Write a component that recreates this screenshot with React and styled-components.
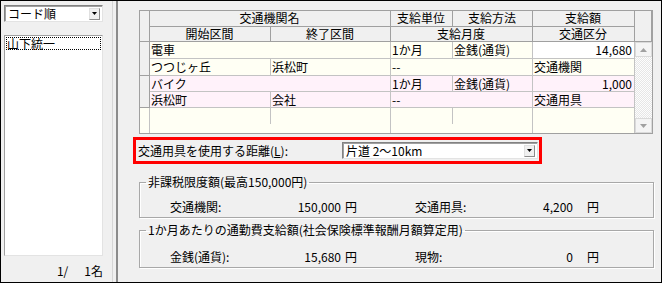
import React from 'react';
import styled, { createGlobalStyle } from 'styled-components';

const GlobalStyle = createGlobalStyle`
  html, body {
    margin: 0;
    padding: 0;
    background: #f0f0f0;
  }
  body {
    font-family: "Noto Sans CJK JP", "Noto Sans", sans-serif;
    font-size: 12px;
    color: #000;
  }
`;

const Window = styled.div`
  width: 662px;
  height: 283px;
  box-sizing: border-box;
  border: 1px solid #000;
  background: #f0f0f0;
  display: flex;
`;

const LeftPane = styled.div`
  width: 112px;
  box-sizing: border-box;
  border-right: 1px solid #d6d6d6;
  padding: 4px 8px 0 3px;
  display: flex;
  flex-direction: column;
`;

const Splitter = styled.div`
  width: 5px;
  box-sizing: border-box;
  border-right: 2px solid #8c8c8c;
`;

const RightPane = styled.div`
  flex: 1;
  padding: 9px 6px 0 15px;
  display: flex;
  flex-direction: column;
`;

const Combo = styled.div`
  width: ${p => p.$width}px;
  height: 17px;
  box-sizing: border-box;
  border: 1px solid #828282;
  border-right-color: #e3e3e3;
  border-bottom-color: #e3e3e3;
  box-shadow: inset 1px 1px 0 #a0a0a0;
  background: #fff;
  display: flex;
  align-items: center;
  justify-content: space-between;
  padding: 0 2px 0 3px;
  line-height: 15px;
  white-space: nowrap;
`;

const DropButton = styled.div`
  width: 11px;
  height: 12px;
  box-sizing: border-box;
  border: 1px solid #8c8c8c;
  border-top-color: #e0e0e0;
  border-left-color: #e0e0e0;
  background: #f0f0f0;
  display: flex;
  align-items: center;
  justify-content: center;
`;

const ListBox = styled.div`
  margin-top: 13px;
  width: 99px;
  height: 221px;
  box-sizing: border-box;
  border: 1px solid #a0a0a0;
  border-right-color: #e3e3e3;
  border-bottom-color: #e3e3e3;
  background: #fff;
  padding: 1px 1px 0;
`;

const ListItem = styled.div`
  border: 1px dotted #000;
  line-height: 12px;
  height: 13px;
  box-sizing: border-box;
  white-space: nowrap;
`;

const Counter = styled.div`
  flex: 1;
  display: flex;
  justify-content: flex-end;
  align-items: center;
  gap: 16px;
  padding-right: 1px;
  padding-top: 2px;
`;

const Grid = styled.div`
  margin-left: 6px;
  width: 514px;
  height: 124px;
  box-sizing: border-box;
  border: 1px solid #a0a0a0;
  display: grid;
  grid-template-columns: 10px 121px 120px 62px 80px 102px 17px;
  grid-template-rows: 16px 15px 17px 17px 16px 16px 1fr;
  background: #fffff4;
`;

const Cell = styled.div`
  grid-column: ${p => p.$col};
  grid-row: ${p => p.$row};
  box-sizing: border-box;
  border-right: 1px solid #c3c3c3;
  border-bottom: 1px solid #c3c3c3;
  background: ${p => p.$bg || 'transparent'};
  padding: 0 2px 0 1px;
  line-height: 15px;
  white-space: nowrap;
  text-align: ${p => (p.$right ? 'right' : 'left')};
`;

const HeadCell = styled(Cell)`
  background: #f0f0f0;
  border-color: #a0a0a0;
  text-align: center;
  line-height: 14px;
`;

const RowHead = styled(Cell)`
  background: #f0f0f0;
  border-color: #a0a0a0;
`;

const FillCell = styled(Cell)`
  border-bottom: none;
  border-right: ${p => (p.$partial ? 'none' : '1px solid #c3c3c3')};
  background: ${p =>
    p.$partial
      ? 'linear-gradient(#c3c3c3, #c3c3c3) right top / 1px 16px no-repeat'
      : 'transparent'};
`;

const ScrollBar = styled.div`
  grid-column: 7;
  grid-row: 3 / 8;
  display: flex;
  flex-direction: column;
  justify-content: space-between;
  background: repeating-conic-gradient(#fdfdfd 0 25%, #e6e6e6 0 50%) 0 0 / 2px 2px;
`;

const ScrollButton = styled.div`
  height: 15px;
  box-sizing: border-box;
  border: 1px solid #dadada;
  background: #f4f4f4;
  display: flex;
  align-items: center;
  justify-content: center;
`;

const DistanceBox = styled.div`
  margin-top: 3px;
  width: 409px;
  height: 27px;
  box-sizing: border-box;
  border: 3px solid #f00;
  display: flex;
  align-items: center;
  justify-content: space-between;
  padding: 0 1px 0 2px;
`;

const Underline = styled.span`
  text-decoration: underline;
`;

const Group = styled.fieldset`
  margin: ${p => p.$top}px 0 0 6px;
  width: 515px;
  box-sizing: border-box;
  border: 1px solid #a8a8a8;
  box-shadow: 1px 1px 0 #fff, inset 1px 1px 0 #fff;
  padding: 0 0 2px 6px;
  min-width: 0;
`;

const Legend = styled.legend`
  padding: 0 2px;
  line-height: 14px;
  white-space: nowrap;
`;

const AmountRow = styled.div`
  display: grid;
  grid-template-columns: 120px 51px 74px 95px 63px 30px;
  padding: ${p => p.$top}px 0 0 24px;
  line-height: 16px;
  white-space: nowrap;
`;

const Value = styled.div`
  text-align: right;
`;

const Yen = styled.div`
  padding-left: ${p => p.$pad}px;
`;

function Arrow({ down, color = '#a0a0a0', w = 7 }) {
  const h = Math.ceil(w / 2);
  return (
    <svg width={w} height={h} viewBox={`0 0 ${w} ${h}`}>
      <polygon
        points={down ? `0,0 ${w},0 ${w / 2},${h}` : `0,${h} ${w},${h} ${w / 2},0`}
        fill={color}
      />
    </svg>
  );
}

const records = [
  {
    bg: '#fffff4',
    name: '電車',
    unit: '1か月',
    method: '金銭(通貨)',
    amount: '14,680',
    amountBg: '#ffffff',
    from: 'つつじヶ丘',
    to: '浜松町',
    month: '--',
    kind: '交通機関',
  },
  {
    bg: '#fff2fa',
    name: 'バイク',
    unit: '1か月',
    method: '金銭(通貨)',
    amount: '1,000',
    from: '浜松町',
    to: '会社',
    month: '--',
    kind: '交通用具',
  },
];

export default function App() {
  return (
    <>
      <GlobalStyle />
      <Window>
        <LeftPane>
          <Combo $width={99}>
            <span>コード順</span>
            <DropButton>
              <Arrow down color="#000" w={5} />
            </DropButton>
          </Combo>
          <ListBox>
            <ListItem>山下統一</ListItem>
          </ListBox>
          <Counter>
            <span>1/</span>
            <span>1名</span>
          </Counter>
        </LeftPane>
        <Splitter />
        <RightPane>
          <Grid>
            <HeadCell $col="1" $row="1 / 3" />
            <HeadCell $col="2 / 4" $row="1">交通機関名</HeadCell>
            <HeadCell $col="4" $row="1">支給単位</HeadCell>
            <HeadCell $col="5" $row="1">支給方法</HeadCell>
            <HeadCell $col="6" $row="1">支給額</HeadCell>
            <HeadCell $col="7" $row="1 / 3" />
            <HeadCell $col="2" $row="2">開始区間</HeadCell>
            <HeadCell $col="3" $row="2">終了区間</HeadCell>
            <HeadCell $col="4 / 6" $row="2">支給月度</HeadCell>
            <HeadCell $col="6" $row="2">交通区分</HeadCell>

            {records.map((r, i) => {
              const top = 3 + i * 2;
              return (
                <React.Fragment key={r.name}>
                  <RowHead $col="1" $row={`${top} / ${top + 2}`} />
                  <Cell $col="2 / 4" $row={top} $bg={r.bg}>{r.name}</Cell>
                  <Cell $col="4" $row={top} $bg={r.bg}>{r.unit}</Cell>
                  <Cell $col="5" $row={top} $bg={r.bg}>{r.method}</Cell>
                  <Cell $col="6" $row={top} $bg={r.amountBg || r.bg} $right>{r.amount}</Cell>
                  <Cell $col="2" $row={top + 1} $bg={r.bg}>{r.from}</Cell>
                  <Cell $col="3" $row={top + 1} $bg={r.bg}>{r.to}</Cell>
                  <Cell $col="4 / 6" $row={top + 1} $bg={r.bg}>{r.month}</Cell>
                  <Cell $col="6" $row={top + 1} $bg={r.bg}>{r.kind}</Cell>
                </React.Fragment>
              );
            })}

            <FillCell $col="1" $row="7" />
            <FillCell $col="2" $row="7" $partial />
            <FillCell $col="3" $row="7" />
            <FillCell $col="4" $row="7" $partial />
            <FillCell $col="5" $row="7" />
            <FillCell $col="6" $row="7" />

            <ScrollBar>
              <ScrollButton>
                <Arrow />
              </ScrollButton>
              <ScrollButton>
                <Arrow down />
              </ScrollButton>
            </ScrollBar>
          </Grid>

          <DistanceBox>
            <span>
              交通用具を使用する距離(<Underline>L</Underline>):
            </span>
            <Combo $width={196}>
              <span>片道 2～10km</span>
              <DropButton>
                <Arrow down color="#000" w={5} />
              </DropButton>
            </Combo>
          </DistanceBox>

          <Group $top={11}>
            <Legend>非課税限度額(最高150,000円)</Legend>
            <AmountRow $top={10}>
              <span>交通機関:</span>
              <Value>150,000</Value>
              <Yen $pad={4}>円</Yen>
              <span>交通用具:</span>
              <Value>4,200</Value>
              <Yen $pad={14}>円</Yen>
            </AmountRow>
          </Group>

          <Group $top={5}>
            <Legend>1か月あたりの通勤費支給額(社会保険標準報酬月額算定用)</Legend>
            <AmountRow $top={12}>
              <span>金銭(通貨):</span>
              <Value>15,680</Value>
              <Yen $pad={4}>円</Yen>
              <span>現物:</span>
              <Value>0</Value>
              <Yen $pad={14}>円</Yen>
            </AmountRow>
          </Group>
        </RightPane>
      </Window>
    </>
  );
}
